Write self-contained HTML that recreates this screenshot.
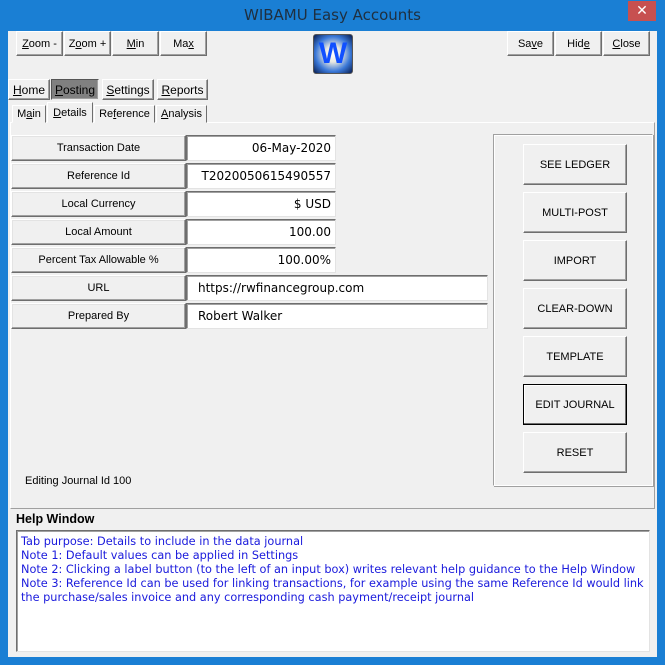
<!DOCTYPE html>
<html><head><style>
*{margin:0;padding:0;box-sizing:border-box}
body{width:665px;height:665px;background:#1a7fd4;position:relative;overflow:hidden;font-family:"Liberation Sans","DejaVu Sans",sans-serif;font-size:11px;color:#000}
.a{position:absolute}
.client{left:8px;top:31px;width:649px;height:626px;background:#f0f0f0}
.btn{position:absolute;background:#f0f0f0;border:1px solid;border-color:#fff #6e6e6e #6e6e6e #fff;box-shadow:inset -1px -1px 0 #a0a0a0;display:flex;align-items:center;justify-content:center;font-size:11px}
.lbl{position:absolute;left:11px;width:175px;height:26px;background:#f0f0f0;border:1px solid;border-color:#fff #6e6e6e #6e6e6e #fff;box-shadow:inset -1px -1px 0 #a0a0a0,inset 1px 1px 0 #e3e3e3;display:flex;align-items:center;justify-content:center;font-size:11px}
.inp{position:absolute;left:186px;height:26px;background:#fff;border:1px solid;border-color:#6e6e6e #e3e3e3 #e3e3e3 #6e6e6e;box-shadow:inset 1px 1px 0 #a0a0a0;font-family:"DejaVu Sans",sans-serif;font-size:12px;display:flex;align-items:center}
.r{justify-content:flex-end;padding-right:4px;width:150px}
.l{padding-left:11px;width:302px}
.tab{position:absolute;background:#f0f0f0;border:1px solid;border-color:#fff #6e6e6e #f0f0f0 #fff;display:flex;align-items:center;justify-content:center;font-size:11px}
.rb{left:523px;width:104px;height:41px}
u{text-decoration:underline}
.help{font-family:"DejaVu Sans",sans-serif;font-size:11.3px;color:#1a1adc;line-height:14px}
</style></head><body>
<div class="a" style="left:0;top:0;width:665px;height:31px;text-align:center;line-height:31px;font-size:15px;color:#1f2f3f;font-family:'DejaVu Sans',sans-serif">WIBAMU Easy Accounts</div>
<div class="a" style="left:628px;top:1px;width:28px;height:20px;background:#c75050;color:#fff;text-align:center;line-height:19px;font-size:14px;font-weight:bold">✕</div>
<div class="a client"></div>
<div class="btn" style="left:16px;top:31px;width:47px;height:25px"><u>Z</u>oom -</div>
<div class="btn" style="left:64px;top:31px;width:47px;height:25px">Z<u>o</u>om +</div>
<div class="btn" style="left:112px;top:31px;width:47px;height:25px"><u>M</u>in</div>
<div class="btn" style="left:160px;top:31px;width:47px;height:25px">Ma<u>x</u></div>
<div class="btn" style="left:507px;top:31px;width:47px;height:25px">Sa<u>v</u>e</div>
<div class="btn" style="left:555px;top:31px;width:47px;height:25px">Hid<u>e</u></div>
<div class="btn" style="left:603px;top:31px;width:47px;height:25px"><u>C</u>lose</div>
<div class="a" style="left:313px;top:34px;width:40px;height:40px;border:1px solid #555;background:radial-gradient(circle,#fff 0%,#e8e8e0 30%,#3a78d8 65%,#0a1e50 100%);border-radius:3px;color:#1050ff;font-size:30px;font-weight:bold;text-align:center;line-height:38px;font-family:'Liberation Sans',sans-serif">W</div>
<div class="btn" style="left:8px;top:79px;width:42px;height:21px;font-size:12px"><u>H</u>ome</div>
<div class="btn" style="left:51px;top:79px;width:48px;height:21px;font-size:12px;background:#808080;border-color:#555 #eee #eee #555"><u>P</u>osting</div>
<div class="btn" style="left:102px;top:79px;width:52px;height:21px;font-size:12px"><u>S</u>ettings</div>
<div class="btn" style="left:157px;top:79px;width:51px;height:21px;font-size:12px"><u>R</u>eports</div>
<div class="a" style="left:10px;top:122px;width:645px;height:387px;border:1px solid;border-color:#fff #a0a0a0 #a0a0a0 #fff"></div>
<div class="tab" style="left:12px;top:105px;width:34px;height:18px">M<u>a</u>in</div>
<div class="tab" style="left:47px;top:102px;width:46px;height:21px;z-index:2"><u>D</u>etails</div>
<div class="tab" style="left:94px;top:105px;width:61px;height:18px">Re<u>f</u>erence</div>
<div class="tab" style="left:156px;top:105px;width:51px;height:18px"><u>A</u>nalysis</div>
<div class="lbl" style="top:135px">Transaction Date</div><div class="inp r" style="top:135px">06-May-2020</div>
<div class="lbl" style="top:163px">Reference Id</div><div class="inp r" style="top:163px">T2020050615490557</div>
<div class="lbl" style="top:191px">Local Currency</div><div class="inp r" style="top:191px">$ USD</div>
<div class="lbl" style="top:219px">Local Amount</div><div class="inp r" style="top:219px">100.00</div>
<div class="lbl" style="top:247px">Percent Tax Allowable %</div><div class="inp r" style="top:247px">100.00%</div>
<div class="lbl" style="top:275px">URL</div><div class="inp l" style="top:275px">https://rwfinancegroup.com</div>
<div class="lbl" style="top:303px">Prepared By</div><div class="inp l" style="top:303px">Robert Walker</div>
<div class="a" style="left:493px;top:134px;width:160px;height:352px;border:1px solid;border-color:#a0a0a0 #fff #fff #a0a0a0;box-shadow:inset 1px 1px 0 #fff,1px 1px 0 #a0a0a0"></div>
<div class="btn rb" style="top:144px">SEE LEDGER</div>
<div class="btn rb" style="top:192px">MULTI-POST</div>
<div class="btn rb" style="top:240px">IMPORT</div>
<div class="btn rb" style="top:288px">CLEAR-DOWN</div>
<div class="btn rb" style="top:336px">TEMPLATE</div>
<div class="btn rb" style="top:384px;border:1px solid #000;box-shadow:inset -1px -1px 0 #6e6e6e,inset 1px 1px 0 #fff">EDIT JOURNAL</div>
<div class="btn rb" style="top:432px">RESET</div>
<div class="a" style="left:25px;top:475px;font-size:11px">Editing Journal Id 100</div>
<div class="a" style="left:16px;top:512px;font-size:12.5px;font-weight:bold">Help Window</div>
<div class="a help" style="left:16px;top:530px;width:634px;height:122px;background:#fff;border:1px solid;border-color:#6e6e6e #e3e3e3 #e3e3e3 #6e6e6e;box-shadow:inset 1px 1px 0 #a0a0a0;padding:4px 0 0 4px;white-space:nowrap">Tab purpose: Details to include in the data journal<br>Note 1: Default values can be applied in Settings<br>Note 2: Clicking a label button (to the left of an input box) writes relevant help guidance to the Help Window<br>Note 3: Reference Id can be used for linking transactions, for example using the same Reference Id would link<br>the purchase/sales invoice and any corresponding cash payment/receipt journal</div>
</body></html>
